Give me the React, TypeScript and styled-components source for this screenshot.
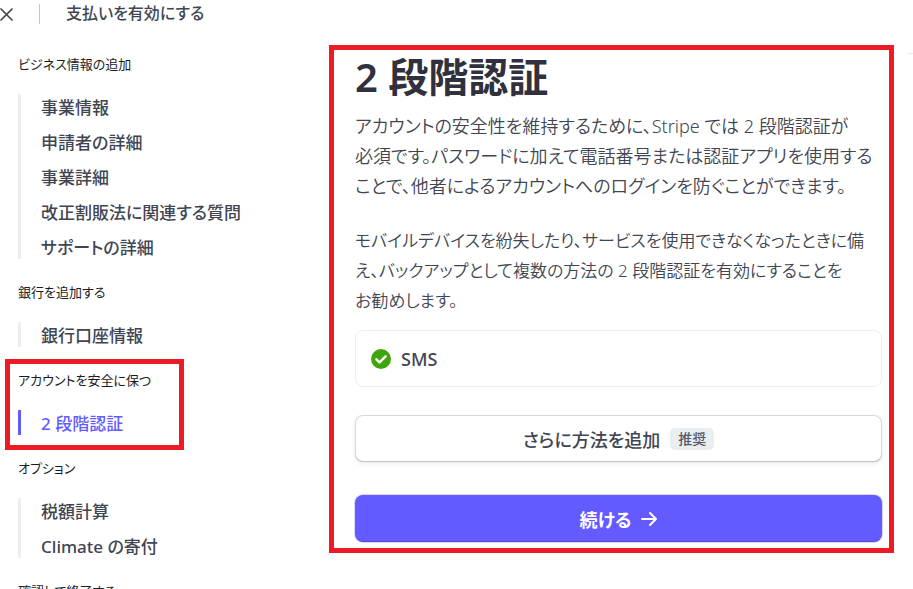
import React from "react";
import styled, { createGlobalStyle, css } from "styled-components";

const GlobalStyle = createGlobalStyle`
  *, *::after { box-sizing: border-box; }
  body {
    margin: 0;
    background: #ffffff;
    color: #414552;
    font-family: "Noto Sans", "Noto Sans CJK JP", sans-serif;
    font-feature-settings: "palt";
  }
`;

const Page = styled.div`
  display: flex;
  flex-direction: column;
  height: 100vh;
  overflow: hidden;
`;

const TopBar = styled.header`
  display: flex;
  align-items: center;
  flex: none;
  height: 27px;
`;

const CloseButton = styled.button`
  display: flex;
  width: 39px;
  padding: 0;
  border: 0;
  background: none;
  color: #414552;
  cursor: pointer;
`;

const TopTitle = styled.div`
  height: 20px;
  padding-left: 26px;
  border-left: 1px solid #c0c8d2;
  font-size: 16px;
  font-weight: 500;
  line-height: 18px;
`;

const Body = styled.div`
  display: flex;
  align-items: flex-start;
  flex: 1;
`;

const Sidebar = styled.nav`
  flex: 0 0 329px;
  padding: 28px 0 0 18px;
`;

const Group = styled.section<{ $marked?: boolean }>`
  position: relative;
  margin-bottom: 24px;
  ${(p) =>
    p.$marked &&
    css`
      &::after {
        content: "";
        position: absolute;
        top: -12px;
        bottom: -15px;
        left: -13px;
        width: 179px;
        border: 5px solid #ed1c24;
        pointer-events: none;
      }
    `}
`;

const GroupTitle = styled.h2`
  margin: 0 0 21px;
  color: #1a1b25;
  font-size: 13px;
  font-weight: 400;
  line-height: 18px;
`;

const Steps = styled.ul<{ $active?: boolean }>`
  display: flex;
  flex-direction: column;
  gap: 10px;
  margin: 0;
  padding: 0 0 0 20px;
  border-left: 3px solid ${(p) => (p.$active ? "#635bff" : "#ebeef1")};
  list-style: none;
`;

const Step = styled.li`
  height: 25px;
  line-height: 27px;
`;

const StepLink = styled.a<{ $active?: boolean }>`
  color: ${(p) => (p.$active ? "#635bff" : "#414552")};
  font-size: 17px;
  font-weight: 500;
  text-decoration: none;
  white-space: nowrap;
`;

const Panel = styled.main`
  flex: 1;
  min-width: 0;
  margin-top: 18px;
  padding: 0 7px 6px 21px;
  border: 5px solid #ed1c24;
`;

const Rail = styled.div`
  flex: none;
  width: 19px;
  padding: 26px 0 0 13px;
`;

const RailLine = styled.div`
  height: 1px;
  background: #ebeef1;
`;

const Title = styled.h1`
  margin: 0 0 7px;
  color: #30313d;
  font-size: 40px;
  font-weight: 600;
  line-height: 54px;
`;

const Paragraph = styled.p<{ $compact?: boolean }>`
  margin: 0 0 25px;
  font-size: ${(p) => (p.$compact ? 17 : 18)}px;
  font-weight: 350;
  line-height: 30px;
  white-space: nowrap;
`;

const MethodCard = styled.div`
  display: flex;
  align-items: center;
  gap: 10px;
  height: 57px;
  margin-top: -11px;
  padding: 0 15px;
  border: 1px solid #ebeef1;
  border-radius: 8px;
  font-size: 18px;
  font-weight: 500;
`;

const Button = styled.button<{ $primary?: boolean }>`
  display: flex;
  align-items: center;
  justify-content: center;
  gap: 10px;
  width: 100%;
  height: 47px;
  padding: 0;
  border: 0;
  border-radius: 8px;
  font: inherit;
  font-feature-settings: inherit;
  font-size: 18px;
  cursor: pointer;
  ${(p) =>
    p.$primary
      ? css`
          margin-top: 33px;
          background: #635bff;
          color: #ffffff;
          font-weight: 700;
          box-shadow: 0 0 0 1px rgba(99, 91, 255, 0.25), inset 0 -1px 0 rgba(0, 0, 0, 0.15);
        `
      : css`
          margin-top: 28px;
          background: #ffffff;
          color: #414552;
          font-weight: 500;
          box-shadow: inset 0 -1px 0 #c0c1c4, inset 0 0 0 1px #d8d9dc, 0 2px 4px rgba(60, 66, 87, 0.1);
        `}
`;

const Badge = styled.span`
  padding: 0 8px;
  border-radius: 5px;
  background: #ebeef1;
  color: #545969;
  font-size: 14px;
  line-height: 22px;
`;

const groups = [
  { title: "ビジネス情報の追加", steps: ["事業情報", "申請者の詳細", "事業詳細", "改正割販法に関連する質問", "サポートの詳細"] },
  { title: "銀行を追加する", steps: ["銀行口座情報"] },
  { title: "アカウントを安全に保つ", steps: ["2 段階認証"], active: true },
  { title: "オプション", steps: ["税額計算", "Climate の寄付"] },
  { title: "確認して終了する", steps: [] },
];

export default function App() {
  return (
    <Page lang="ja">
      <GlobalStyle />
      <TopBar>
        <CloseButton type="button" aria-label="閉じる">
          <svg width="13" height="14" viewBox="0 0 13 14" fill="none" stroke="currentColor" strokeWidth="1.7" strokeLinecap="round">
            <path d="M1 2l11 11M12 2L1 13" />
          </svg>
        </CloseButton>
        <TopTitle>支払いを有効にする</TopTitle>
      </TopBar>
      <Body>
        <Sidebar>
          {groups.map((g) => (
            <Group key={g.title} $marked={g.active}>
              <GroupTitle>{g.title}</GroupTitle>
              {g.steps.length > 0 && (
                <Steps $active={g.active}>
                  {g.steps.map((s) => (
                    <Step key={s}>
                      <StepLink href="#" $active={g.active}>{s}</StepLink>
                    </Step>
                  ))}
                </Steps>
              )}
            </Group>
          ))}
        </Sidebar>
        <Panel>
          <Title>2 段階認証</Title>
          <Paragraph>
            アカウントの安全性を維持するために、Stripe では 2 段階認証が
            <br />
            必須です。パスワードに加えて電話番号または認証アプリを使用する
            <br />
            ことで、他者によるアカウントへのログインを防ぐことができます。
          </Paragraph>
          <Paragraph $compact>
            モバイルデバイスを紛失したり、サービスを使用できなくなったときに備
            <br />
            え、バックアップとして複数の方法の 2 段階認証を有効にすることを
            <br />
            お勧めします。
          </Paragraph>
          <MethodCard>
            <svg width="20" height="20" viewBox="0 0 20 20" fill="none">
              <circle cx="10" cy="10" r="10" fill="#3fa40d" />
              <path d="M5.4 10.3l3.1 3 6.1-6" stroke="#fff" strokeWidth="2.4" strokeLinecap="round" strokeLinejoin="round" />
            </svg>
            SMS
          </MethodCard>
          <Button type="button">
            さらに方法を追加 <Badge>推奨</Badge>
          </Button>
          <Button type="button" $primary>
            続ける
            <svg width="16" height="16" viewBox="0 0 16 16" fill="none" stroke="currentColor" strokeWidth="2" strokeLinecap="round" strokeLinejoin="round">
              <path d="M1 8h14M9 2l6 6-6 6" />
            </svg>
          </Button>
        </Panel>
        <Rail>
          <RailLine />
        </Rail>
      </Body>
    </Page>
  );
}
